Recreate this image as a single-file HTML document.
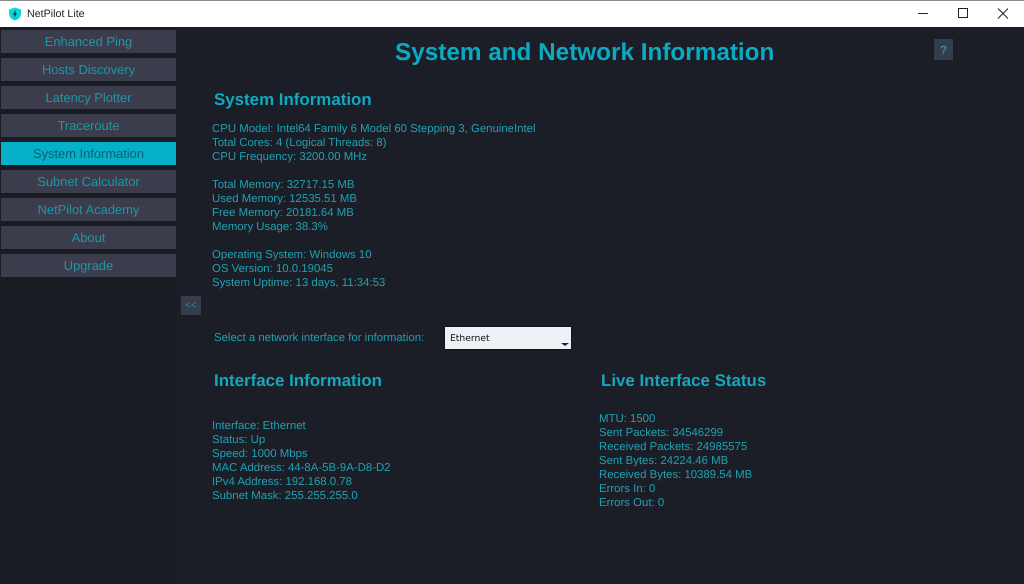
<!DOCTYPE html>
<html><head><meta charset="utf-8"><style>
html,body{margin:0;padding:0;width:1024px;height:584px;overflow:hidden;background:#1b1e26;font-family:"Liberation Sans",sans-serif;text-rendering:geometricPrecision}
div{position:absolute;white-space:nowrap}
#top{left:0;top:0;width:1024px;height:27px;background:#fff;border-top:1px solid #8a8a8a;box-sizing:border-box}
#title{left:27px;top:7px;line-height:14px;color:#222;font-family:"Liberation Sans",sans-serif;font-size:10.7px}
#side{left:0;top:27px;width:177px;height:557px;background:#1a1c23}
.b{left:1px;width:175px;height:23px;background:#3b3d4c;color:#1d97a8;font-size:12.9px;line-height:23px;text-align:center}
.a{background:#06b0c8;color:#0c5d74}
.t{color:#1fa0b2;font-size:11.4px;line-height:14px}
.h{color:#12a8be;font-weight:bold;font-size:16.9px;line-height:20px}
#main{left:395px;top:38px;font-size:24.3px;line-height:29px;font-weight:bold;color:#0caac2}
.sq{background:#363c4c;color:#1d97a8;text-align:center;font-weight:bold}
</style></head><body>
<div id="top"></div>
<svg style="position:absolute;left:8px;top:7px" width="14" height="14" viewBox="0 0 14 14"><path d="M7 .5 13 2.500V7C13 10.500 10 12.800 7 13.500 4 12.800 1 10.500 1 7V2.500Z" fill="#08d8dc"/><path d="M7.800 3 4.800 7.800H6.600L6 11 9.200 6.300H7.400Z" fill="#10303a"/></svg>
<div id="title">NetPilot Lite</div>
<svg style="position:absolute;left:915px;top:7px" width="100" height="14" viewBox="0 0 100 14" fill="none" stroke="#222" stroke-width="1"><path d="M3 6.500H13"/><rect x="43.500" y="1.500" width="9" height="9"/><path d="M83 1.500 93 11.500M93 1.500 83 11.500"/></svg>
<div id="side"></div>
<div class="b" style="top:30px">Enhanced Ping</div>
<div class="b" style="top:58px">Hosts Discovery</div>
<div class="b" style="top:86px">Latency Plotter</div>
<div class="b" style="top:114px">Traceroute</div>
<div class="b a" style="top:142px">System Information</div>
<div class="b" style="top:170px">Subnet Calculator</div>
<div class="b" style="top:198px">NetPilot Academy</div>
<div class="b" style="top:226px">About</div>
<div class="b" style="top:254px">Upgrade</div>
<div class="sq" style="left:181px;top:296px;width:20px;height:19px;font-size:9px;line-height:18px;font-weight:normal;letter-spacing:.5px">&lt;&lt;</div>
<div class="sq" style="left:934px;top:39px;width:19px;height:21px;font-size:12px;line-height:22px">?</div>
<div id="main">System and Network Information</div>
<div class="h" style="left:214px;top:90px">System Information</div>
<div class="t" style="left:212px;top:122px">CPU Model: Intel64 Family 6 Model 60 Stepping 3, GenuineIntel</div>
<div class="t" style="left:212px;top:136px">Total Cores: 4 (Logical Threads: 8)</div>
<div class="t" style="left:212px;top:150px">CPU Frequency: 3200.00 MHz</div>
<div class="t" style="left:212px;top:178px">Total Memory: 32717.15 MB</div>
<div class="t" style="left:212px;top:192px">Used Memory: 12535.51 MB</div>
<div class="t" style="left:212px;top:206px">Free Memory: 20181.64 MB</div>
<div class="t" style="left:212px;top:220px">Memory Usage: 38.3%</div>
<div class="t" style="left:212px;top:248px">Operating System: Windows 10</div>
<div class="t" style="left:212px;top:262px">OS Version: 10.0.19045</div>
<div class="t" style="left:212px;top:276px">System Uptime: 13 days, 11:34:53</div>
<div class="t" style="left:214px;top:331px">Select a network interface for information:</div>
<div style="left:444px;top:326px;width:128px;height:24px;box-sizing:border-box;border:1px solid #10131a;background:#eef1f5;color:#111;font-family:'DejaVu Sans','Liberation Sans',sans-serif;font-size:9.2px;line-height:23px;padding-left:5px">Ethernet</div>
<div style="left:561px;top:343px;width:0;height:0;border-left:4px solid transparent;border-right:4px solid transparent;border-top:3px solid #222"></div>
<div class="h" style="left:214px;top:371px">Interface Information</div>
<div class="h" style="left:601px;top:371px">Live Interface Status</div>
<div class="t" style="left:212px;top:419px">Interface: Ethernet</div>
<div class="t" style="left:212px;top:433px">Status: Up</div>
<div class="t" style="left:212px;top:447px">Speed: 1000 Mbps</div>
<div class="t" style="left:212px;top:461px">MAC Address: 44-8A-5B-9A-D8-D2</div>
<div class="t" style="left:212px;top:475px">IPv4 Address: 192.168.0.78</div>
<div class="t" style="left:212px;top:489px">Subnet Mask: 255.255.255.0</div>
<div class="t" style="left:599px;top:412px">MTU: 1500</div>
<div class="t" style="left:599px;top:426px">Sent Packets: 34546299</div>
<div class="t" style="left:599px;top:440px">Received Packets: 24985575</div>
<div class="t" style="left:599px;top:454px">Sent Bytes: 24224.46 MB</div>
<div class="t" style="left:599px;top:468px">Received Bytes: 10389.54 MB</div>
<div class="t" style="left:599px;top:482px">Errors In: 0</div>
<div class="t" style="left:599px;top:496px">Errors Out: 0</div>
</body></html>
